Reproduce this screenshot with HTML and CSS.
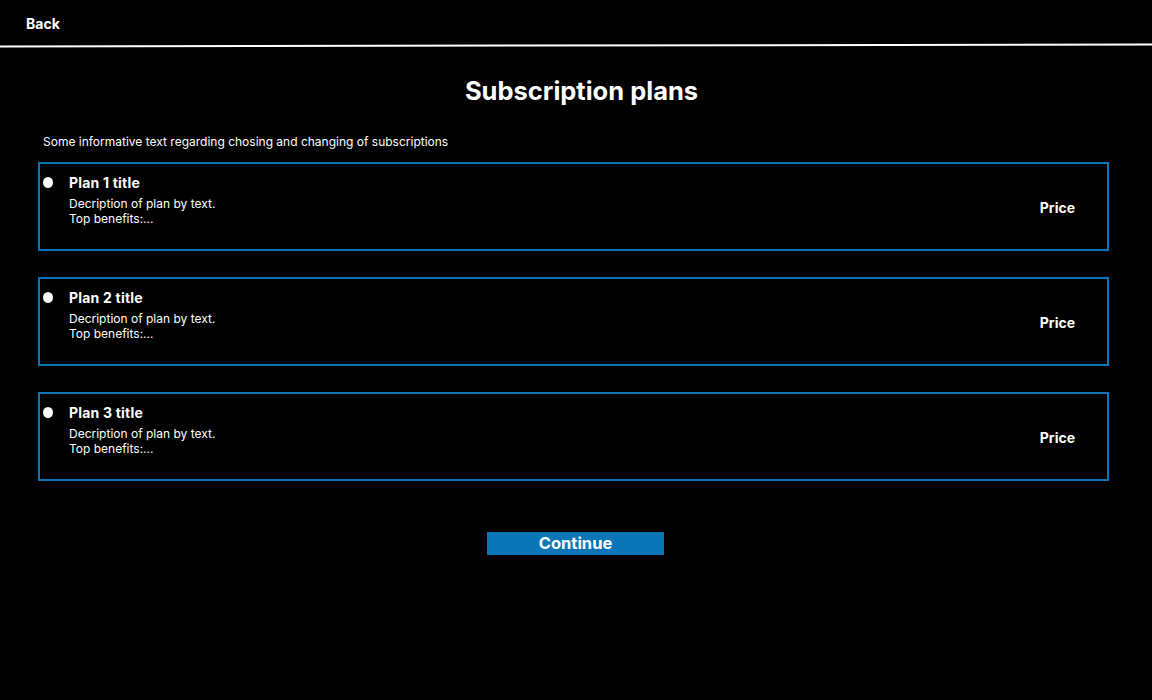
FILE: index.html
```html
<!DOCTYPE html>
<html>
<head>
<meta charset="utf-8">
<link rel="stylesheet" href="styles.css">
</head>
<body>
<header class="topbar">
  <a class="back">Back</a>
</header>
<div class="divider"></div>
<main class="content">
  <h1 class="title">Subscription plans</h1>
  <p class="info">Some informative text regarding chosing and changing of subscriptions</p>
  <div class="plans">
    <div class="plan">
      <span class="radio"></span>
      <div class="plan-body">
        <div class="plan-title">Plan 1 title</div>
        <div class="plan-desc">Decription of plan by text.<br>Top benefits:...</div>
      </div>
      <div class="price">Price</div>
    </div>
    <div class="plan">
      <span class="radio"></span>
      <div class="plan-body">
        <div class="plan-title">Plan 2 title</div>
        <div class="plan-desc">Decription of plan by text.<br>Top benefits:...</div>
      </div>
      <div class="price">Price</div>
    </div>
    <div class="plan">
      <span class="radio"></span>
      <div class="plan-body">
        <div class="plan-title">Plan 3 title</div>
        <div class="plan-desc">Decription of plan by text.<br>Top benefits:...</div>
      </div>
      <div class="price">Price</div>
    </div>
  </div>
  <div class="actions">
    <button class="continue">Continue</button>
  </div>
</main>
</body>
</html>
```
FILE: styles.css
```css
html, body {
  margin: 0;
  padding: 0;
  background: #000;
  color: #fff;
  font-family: Inter, "Noto Sans", sans-serif;
  height: 100%;
}
.topbar {
  height: 44px;
  display: flex;
  align-items: center;
  padding-left: 26px;
}
.back {
  font-size: 14px;
  font-weight: 700;
  color: #fff;
  line-height: 17px;
  margin-top: 3px;
}
.divider {
  height: 2px;
  background: #fff;
  transform: translateY(0.5px) rotate(-0.1deg);
}
.content {
  padding: 0 43px 0 38px;
}
.title {
  margin: 30px 0 0;
  text-align: center;
  font-size: 25.5px;
  font-weight: 700;
  line-height: 29px;
  padding-left: 16px;
  width: 1071px;
  box-sizing: border-box;
}
.info {
  margin: 29px 0 0 5px;
  font-size: 12px;
  line-height: 15px;
}
.plans {
  margin-top: 13px;
  display: flex;
  flex-direction: column;
  gap: 26px;
  width: 1071px;
}
.plan {
  box-sizing: border-box;
  height: 89px;
  border: 2px solid #0a76b9;
  display: flex;
  align-items: flex-start;
  padding: 10px 32px 0 3px;
}
.radio {
  width: 10px;
  height: 11px;
  border-radius: 50%;
  background: #fff;
  margin-top: 3px;
  flex: none;
}
.plan-body {
  margin-left: 16px;
  flex: 1;
}
.plan-title {
  font-size: 14px;
  font-weight: 700;
  line-height: 17px;
  letter-spacing: 0.2px;
}
.plan-desc {
  margin-top: 5px;
  font-size: 12px;
  line-height: 15px;
}
.price {
  align-self: center;
  margin-top: -9px;
  font-size: 14px;
  font-weight: 700;
}
.actions {
  display: flex;
  justify-content: center;
  margin-top: 51px;
  width: 1071px;
}
.continue {
  width: 177px;
  height: 23px;
  border: none;
  background: #0a76b7;
  color: #fff;
  font-family: Inter, "Noto Sans", sans-serif;
  font-size: 16.5px;
  font-weight: 700;
  padding: 0;
  line-height: 23px;
  margin-left: 4px;
}
```
